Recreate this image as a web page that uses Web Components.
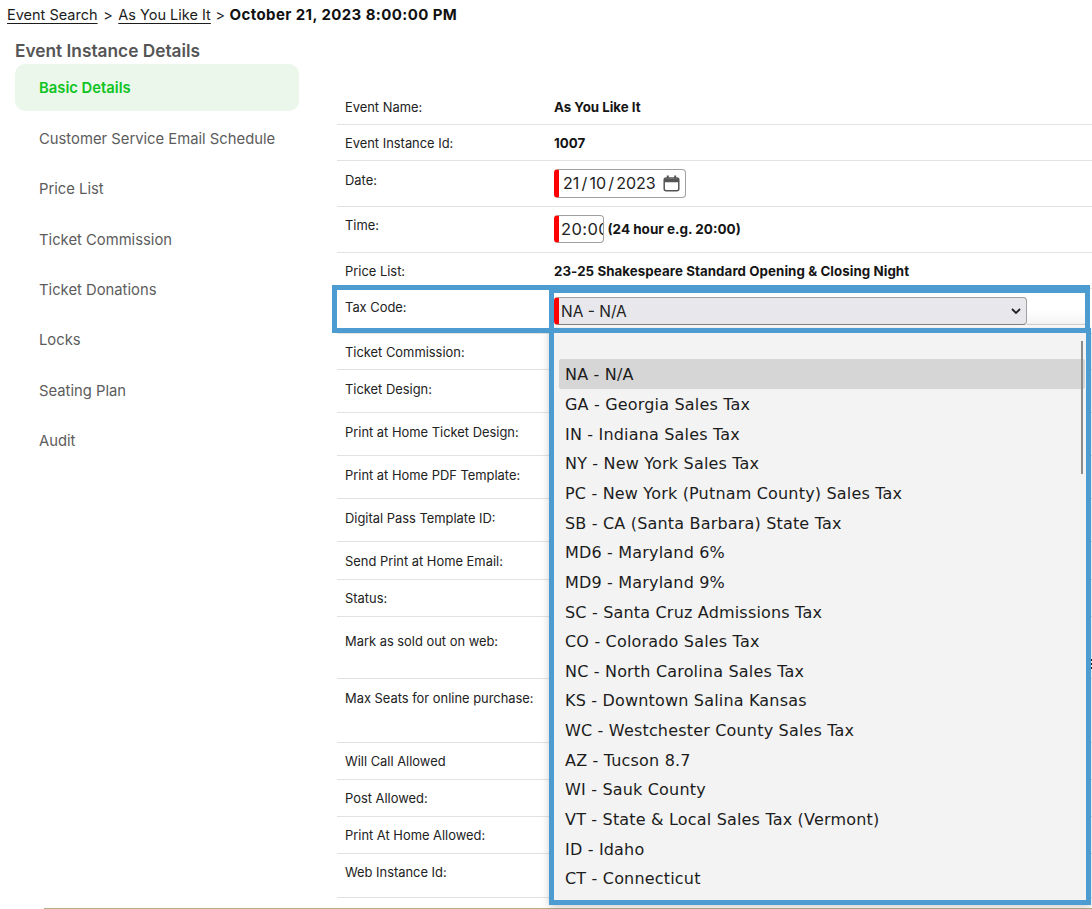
<!DOCTYPE html>
<html>
<head>
<meta charset="utf-8">
<title>Event Instance Details</title>
<style>
  html, body { margin:0; padding:0; background:#fff; }
  body { font-family:"Inter","Liberation Sans",sans-serif; color:#1c1c1c; overflow:hidden; height:909px; }
</style>
</head>
<body>
<event-page></event-page>

<script>
// Breadcrumb at the top
class CrumbBar extends HTMLElement {
  constructor() {
    super();
    this.attachShadow({mode:'open'});
    this.shadowRoot.innerHTML = `
      <style>
        :host { display:block; padding:6px 0 0 7px; height:24px; font-size:14.5px; line-height:18px; white-space:nowrap; }
        u { text-underline-offset:3px; text-decoration-thickness:1px; }
        b { font-weight:700; font-size:15px; letter-spacing:.4px; color:#111; }
      </style>
      <u>Event Search</u><span style="margin:0 1.5px"> &gt; </span><u>As You Like It</u><span style="margin:0 .5px"> &gt; </span><b>October 21, 2023 8:00:00 PM</b>`;
  }
}
customElements.define('crumb-bar', CrumbBar);

// Left nav
class SideItem extends HTMLElement {
  constructor() {
    super();
    this.attachShadow({mode:'open'});
    this.shadowRoot.innerHTML = `
      <style>
        :host { display:flex; align-items:center; box-sizing:border-box; height:47px; margin-bottom:3.4px; padding:1.8px 0 0 24px; border-radius:10px; font-size:14.8px; color:#5c5c5c; }
        :host([active]) { background:#ecf7ec; color:#0fc41f; font-weight:600; padding-top:0; }
      </style>
      <slot></slot>`;
  }
}
customElements.define('side-item', SideItem);

class SideNav extends HTMLElement {
  constructor() {
    super();
    this.attachShadow({mode:'open'});
    this.shadowRoot.innerHTML = `
      <style>
        :host { display:block; width:284px; margin-left:15px; flex:none; }
        h2 { margin:0; height:26px; font-size:17.3px; line-height:26px; font-weight:600; color:#555; white-space:nowrap; }
      </style>
      <h2>Event Instance Details</h2>
      <slot></slot>`;
  }
}
customElements.define('side-nav', SideNav);

// One label/value row of the details table
class DetailRow extends HTMLElement {
  constructor() {
    super();
    this.attachShadow({mode:'open'});
    this.shadowRoot.innerHTML = `
      <style>
        :host { display:grid; grid-template-columns:209px 1fr; box-sizing:border-box; padding-left:8px; border-bottom:1px solid #e2e2e2; font-size:12.9px; line-height:17px; }
        .l { padding-top:var(--top, 10px); color:#222; }
        .v { display:flex; align-items:flex-start; padding-top:var(--vtop, 10px); font-weight:700; font-size:13.3px; color:#151515; }
      </style>
      <div class="l"></div>
      <div class="v"><slot></slot></div>`;
  }
  connectedCallback() {
    this.shadowRoot.querySelector('.l').textContent = this.getAttribute('label');
    this.style.height = this.getAttribute('h') + 'px';
  }
}
customElements.define('detail-row', DetailRow);

// Fake form controls, a real date/select would follow the sandbox locale
class RedField extends HTMLElement {
  constructor() {
    super();
    this.attachShadow({mode:'open'});
    this.shadowRoot.innerHTML = `
      <style>
        :host { display:inline-flex; align-items:center; box-sizing:border-box; border:1px solid #a0a0a0; border-left:5px solid #f00; border-radius:4px; font-weight:400; font-size:16px; color:#222; background:#fff; overflow:hidden; white-space:nowrap; }
      </style>
      <slot></slot>`;
  }
}
customElements.define('red-field', RedField);

// The open list of the tax code select
class TaxList extends HTMLElement {
  constructor() {
    super();
    this.attachShadow({mode:'open'});
    const opts = ['NA - N/A','GA - Georgia Sales Tax','IN - Indiana Sales Tax','NY - New York Sales Tax','PC - New York (Putnam County) Sales Tax','SB - CA (Santa Barbara) State Tax','MD6 - Maryland 6%','MD9 - Maryland 9%','SC - Santa Cruz Admissions Tax','CO - Colorado Sales Tax','NC - North Carolina Sales Tax','KS - Downtown Salina Kansas','WC - Westchester County Sales Tax','AZ - Tucson 8.7','WI - Sauk County','VT - State & Local Sales Tax (Vermont)','ID - Idaho','CT - Connecticut'];
    this.shadowRoot.innerHTML = `
      <style>
        :host { position:absolute; left:549px; top:328px; width:542px; height:577px; box-sizing:border-box; border:5px solid #4c9cd2; background:#f3f3f3; padding:26px 1px 0 5px; box-shadow:0 2px 8px rgba(0,0,0,.2); font-family:"DejaVu Sans",sans-serif; font-size:16px; letter-spacing:.18px; color:#1c1c1c; }
        div.o { box-sizing:border-box; height:29.65px; line-height:29.65px; padding:1.4px 0 0 6px; white-space:nowrap; }
        div.o.on { background:#d6d6d6; border-radius:2px; }
        i { position:absolute; left:527px; top:8px; width:2px; height:133px; background:#8c8c8c; }
      </style>
      ${opts.map((o, n) => `<div class="o${n ? '' : ' on'}">${o.replace('&','&amp;')}</div>`).join('')}
      <i></i>`;
  }
}
customElements.define('tax-list', TaxList);

// Blue annotation frames drawn over the shot
class BlueFrame extends HTMLElement {
  constructor() {
    super();
    this.attachShadow({mode:'open'});
    this.shadowRoot.innerHTML = `<style>:host { position:absolute; box-sizing:border-box; border:5px solid #4c9cd2; pointer-events:none; }</style>`;
  }
}
customElements.define('blue-frame', BlueFrame);

class EventPage extends HTMLElement {
  constructor() {
    super();
    this.attachShadow({mode:'open'});
    this.shadowRoot.innerHTML = `
      <style>
        :host { display:block; position:relative; height:909px; overflow:hidden; }
        .main { display:flex; padding-top:8px; }
        .table { margin-left:38px; flex:1; padding-top:51px; }
        .foot { position:absolute; left:44px; right:0; top:908px; height:1px; background:#b5ad85; }
        .fade { position:absolute; left:1027px; top:309px; width:58px; height:15px; border-bottom:1px solid #cfcfcf; background:linear-gradient(#fff,#f4f4f4); }
        .peek { position:absolute; left:1091px; top:659px; width:1px; height:10px; background:repeating-linear-gradient(#222 0 2px, transparent 2px 4px); }
      </style>
      <crumb-bar></crumb-bar>
      <div class="main">
        <side-nav>
          <side-item active>Basic Details</side-item>
          <side-item>Customer Service Email Schedule</side-item>
          <side-item>Price List</side-item>
          <side-item>Ticket Commission</side-item>
          <side-item>Ticket Donations</side-item>
          <side-item>Locks</side-item>
          <side-item>Seating Plan</side-item>
          <side-item>Audit</side-item>
        </side-nav>
        <div class="table">
          <detail-row label="Event Name:" h="36">As You Like It</detail-row>
          <detail-row label="Event Instance Id:" h="36">1007</detail-row>
          <detail-row label="Date:" h="46" style="--vtop:8px;--top:11px">
            <red-field style="width:132px;height:29px;padding:0 5px 0 4px;justify-content:space-between;word-spacing:-2.3px">21 / 10 / 2023
              <svg width="17" height="17" viewBox="0 0 17 17" fill="none" stroke="#555" stroke-width="1.5"><rect x="1.2" y="3" width="14.6" height="12.8" rx="2"/><path d="M1.2 5.5h14.6" stroke-width="3.4"/><path d="M4.8 .5v3M12.2 .5v3" stroke-width="2"/></svg>
            </red-field>
          </detail-row>
          <detail-row label="Time:" h="46" style="--vtop:8px">
            <red-field style="width:50px;height:28px;padding-left:2px;font-size:16.5px;letter-spacing:.4px">20:00</red-field>
            <span style="margin-left:3.5px;height:28px;line-height:28px;font-size:13.5px">(24 hour e.g. 20:00)</span>
          </detail-row>
          <detail-row label="Price List:" h="36"><span style="letter-spacing:.08px">23-25 Shakespeare Standard Opening &amp; Closing Night</span></detail-row>
          <detail-row label="Tax Code:" h="45" style="--vtop:8px">
            <red-field style="width:473px;height:28px;padding-left:2px;background:#e8e8ec;border-bottom-color:#808080;position:relative;font-size:15.5px">NA - N/A
              <svg style="position:absolute;right:5px;top:10px" width="10" height="7" viewBox="0 0 10 7" fill="none" stroke="#222" stroke-width="1.8"><path d="M1 1l4 4 4-4"/></svg>
            </red-field>
          </detail-row>
          <detail-row label="Ticket Commission:" h="36"></detail-row>
          <detail-row label="Ticket Design:" h="43" style="--top:11px"></detail-row>
          <detail-row label="Print at Home Ticket Design:" h="43" style="--top:11px"></detail-row>
          <detail-row label="Print at Home PDF Template:" h="43" style="--top:11px"></detail-row>
          <detail-row label="Digital Pass Template ID:" h="43" style="--top:11px"></detail-row>
          <detail-row label="Send Print at Home Email:" h="38" style="--top:11px"></detail-row>
          <detail-row label="Status:" h="37"></detail-row>
          <detail-row label="Mark as sold out on web:" h="62" style="--top:16px"></detail-row>
          <detail-row label="Max Seats for online purchase:" h="64" style="--top:11px"></detail-row>
          <detail-row label="Will Call Allowed" h="37"></detail-row>
          <detail-row label="Post Allowed:" h="37"></detail-row>
          <detail-row label="Print At Home Allowed:" h="37"></detail-row>
          <detail-row label="Web Instance Id:" h="44"></detail-row>
        </div>
      </div>
      <div class="foot"></div>
      <div class="fade"></div>
      <div class="peek"></div>
      <tax-list></tax-list>
      <blue-frame style="left:332px;top:285px;width:222px;height:48px"></blue-frame>
      <blue-frame style="left:549px;top:285px;width:541px;height:48px;border-top-width:8px"></blue-frame>`;
  }
}
customElements.define('event-page', EventPage);
</script>
</body>
</html>
